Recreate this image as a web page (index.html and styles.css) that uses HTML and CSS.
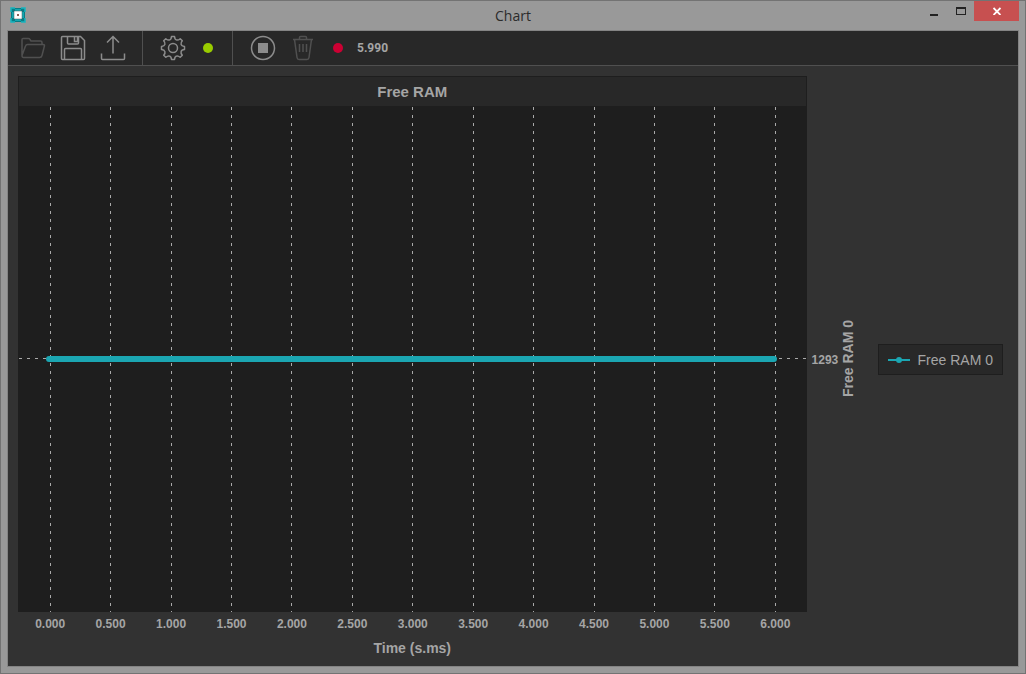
FILE: index.html
```
<!DOCTYPE html>
<html lang="en">
<head>
  <meta charset="UTF-8">
  <meta name="viewport" content="width=device-width, initial-scale=1.0">
  <title>Chart</title>
  <link rel="stylesheet" href="styles.css">
</head>
<body>
  <header class="titlebar">
    <svg class="app-icon" width="16" height="16" viewBox="0 0 16 16">
      <rect x="1" y="1" width="14" height="14" fill="#087d85"/>
      <path d="M1 5V1h4M11 1h4v4M15 11v4h-4M5 15H1v-4M5 3h6M5 13h6M3 5v6M13 5v6" fill="none" stroke="#17b5c0" stroke-width="1.500"/>
      <rect x="4" y="4" width="8" height="8" fill="#fff" stroke="#4c5c5e" stroke-width=".5"/>
      <rect x="7" y="7" width="2" height="2" fill="#8a6058"/>
    </svg>
    <h1 class="window-title">Chart</h1>
    <div class="window-buttons">
      <button class="win-btn" aria-label="Minimize">
        <svg width="10" height="12" viewBox="0 0 10 12"><path d="M1 9h8v2H1z" fill="#222"/></svg>
      </button>
      <button class="win-btn" aria-label="Maximize">
        <svg width="10" height="12" viewBox="0 0 10 12"><path d="M0 2h10v8H0zM1 4v5h8V4z" fill="#222" fill-rule="evenodd"/></svg>
      </button>
      <button class="win-btn win-close" aria-label="Close">
        <svg width="8" height="8" viewBox="0 0 8 8"><path d="M.5 1l7 7M7.500 1l-7 7" stroke="#fff" stroke-width="1.800"/></svg>
      </button>
    </div>
  </header>

  <main class="window">
    <div class="toolbar">
      <div class="tool-group">
        <button class="tool disabled" aria-label="Open">
          <svg viewBox="0 0 26 26"><path d="M2 20V4.500q0-1 1-1h5.500q1 0 1.500 1l1 1.500h9.500q1.500 0 1.500 1.500V9.500M2 20.500L5.500 11q.5-1.500 2-1.500H23q1.800 0 1.400 1.500L22 20.500q-.5 2-2.500 2h-16q-1.500 0-1.500-2z"/></svg>
        </button>
        <button class="tool" aria-label="Save">
          <svg viewBox="0 0 26 26"><path d="M2.500 1.500h18l4 4v18q0 1-1 1h-21q-1 0-1-1v-21q0-1 1-1zM7.500 2v6q0 1 1 1h9q1 0 1-1V2M14.500 2v4.500h3V2M4.500 24V14.500q0-1 1-1h15q1 0 1 1V24"/></svg>
        </button>
        <button class="tool" aria-label="Export">
          <svg viewBox="0 0 26 26"><path d="M13 18.500V2M7 7.500l6-6 6 6M1.500 18.500v5q0 1 1 1h21q1 0 1-1v-5"/></svg>
        </button>
      </div>
      <div class="tool-group">
        <button class="tool" aria-label="Settings">
          <svg viewBox="0 0 26 26">
            <circle cx="13" cy="13" r="4.500"/>
            <path d="M11.500 1.500h3q.3 3.200 2.200 3.500 1.600.3 3.500-1.300l2.100 2.100q-1.700 2-1.200 3.600.5 1.800 3.400 2.100v3q-2.900.3-3.400 2.100-.5 1.600 1.200 3.600l-2.100 2.100q-1.900-1.600-3.500-1.300-1.900.3-2.200 3.500h-3q-.3-3.200-2.200-3.500-1.600-.3-3.500 1.300l-2.100-2.100q1.700-2 1.200-3.600-.5-1.800-3.400-2.100v-3q2.900-.3 3.400-2.100.5-1.600-1.200-3.600l2.100-2.100q1.900 1.600 3.500 1.300 1.900-.3 2.200-3.500z" stroke-linejoin="round"/>
          </svg>
        </button>
        <span class="status-dot green"></span>
      </div>
      <div class="tool-group">
        <button class="tool" aria-label="Stop">
          <svg viewBox="0 0 26 26"><circle cx="13" cy="13" r="11.500"/><path d="M8 8h10v10H8z" class="solid"/></svg>
        </button>
        <button class="tool disabled" aria-label="Clear">
          <svg viewBox="0 0 26 26"><path d="M3 4.500h20M9.500 4V2.500q0-1 1-1h5q1 0 1 1V4M4.500 4.500l2.500 18q.3 2 2 2h8q1.700 0 2-2l2.500-18M9.500 9v8M13 9v8M16.500 9v8"/></svg>
        </button>
        <span class="status-dot red"></span>
        <span class="time-value">5.990</span>
      </div>
    </div>

    <div class="content">
      <section class="chart">
        <h2 class="chart-title">Free RAM</h2>
        <div class="plot">
          <div class="grid-lines">
            <i></i><i></i><i></i><i></i><i></i><i></i><i></i><i></i><i></i><i></i><i></i><i></i><i></i>
          </div>
          <div class="value-line"></div>
          <div class="series"></div>
        </div>
        <div class="y-axis">
          <span class="y-tick">1293</span>
          <span class="y-label">Free RAM 0</span>
        </div>
        <div class="x-axis">
          <div class="x-ticks">
            <span>0.000</span>
            <span>0.500</span>
            <span>1.000</span>
            <span>1.500</span>
            <span>2.000</span>
            <span>2.500</span>
            <span>3.000</span>
            <span>3.500</span>
            <span>4.000</span>
            <span>4.500</span>
            <span>5.000</span>
            <span>5.500</span>
            <span>6.000</span>
          </div>
          <div class="x-label">Time (s.ms)</div>
        </div>
      </section>
      <aside class="legend">
        <svg width="22" height="8" viewBox="0 0 22 8"><path d="M0 4h22" stroke="#1ba6b2" stroke-width="2"/><circle cx="11" cy="4" r="3" fill="#1ba6b2"/></svg>
        <span>Free RAM 0</span>
      </aside>
    </div>
  </main>
</body>
</html>
```
FILE: styles.css
```
* {
  box-sizing: border-box;
}

body {
  margin: 0;
  height: 100vh;
  display: flex;
  flex-direction: column;
  padding: 0 6px 6px;
  border: 1px solid #737373;
  background: #999;
  color: #a5a5a5;
  font-family: "Liberation Sans", Arial, sans-serif;
}

button {
  display: flex;
  align-items: center;
  justify-content: center;
  padding: 0;
  border: none;
  background: none;
}

/* title bar */
.titlebar {
  display: grid;
  grid-template-columns: 1fr auto 1fr;
  height: 29px;
}

.app-icon {
  margin: 6px 0 0 3px;
}

.window-title {
  margin: 0;
  color: #2b2b2b;
  font: 14px/29px "Open Sans", "Noto Sans", sans-serif;
}

.window-buttons {
  display: flex;
  justify-content: flex-end;
}

.win-btn {
  width: 27px;
  height: 20px;
}

.win-close {
  width: 45px;
  background: #c75050;
}

/* window body */
.window {
  flex: 1;
  min-height: 0;
  display: flex;
  flex-direction: column;
  border: 1px solid #848484;
  background: #323232;
}

.toolbar {
  display: flex;
  height: 35px;
  border-bottom: 1px solid #505050;
  background: #282828;
}

.tool-group {
  display: flex;
  align-items: center;
  gap: 14px;
  padding: 0 16px 0 12px;
}

.tool-group + .tool-group {
  padding: 0 19px 0 17px;
  border-left: 1px solid #505050;
}

.tool svg {
  width: 26px;
  height: 26px;
  fill: none;
  stroke: #8c8c8c;
  stroke-width: 1.5;
}

.tool.disabled svg {
  stroke: #505050;
}

.tool .solid {
  fill: #8c8c8c;
  stroke: none;
}

.status-dot {
  width: 10px;
  height: 10px;
  margin: 0 0 0 3px;
  border-radius: 50%;
}

.green {
  background: #9c0;
}

.red {
  background: #cc0033;
}

.time-value {
  font: bold 12px/16px Roboto, sans-serif;
}

/* chart */
.content {
  flex: 1;
  min-height: 0;
  display: flex;
  align-items: stretch;
  gap: 21px;
  padding: 10px 15px 9px 10px;
}

.chart {
  flex: 1;
  display: grid;
  grid-template-columns: 1fr 50px;
  grid-template-rows: 30px 1fr 45px;
}

.chart-title {
  margin: 0;
  border: 1px solid #1e1e1e;
  border-bottom: none;
  background: #282828;
  font-size: 15px;
  line-height: 30px;
  text-align: center;
}

.plot {
  grid-row: 2;
  position: relative;
  background: #1e1e1e;
}

.grid-lines {
  display: grid;
  grid-template-columns: repeat(13, 1fr);
  height: 100%;
  padding: 1px 1px 0 2px;
}

.grid-lines i {
  width: 1px;
  margin: 0 auto;
  background: repeating-linear-gradient(#aaa 0 3px, transparent 3px 8px);
}

.value-line {
  position: absolute;
  top: 50%;
  left: 1px;
  right: 1px;
  height: 1px;
  margin-top: -1px;
  background: repeating-linear-gradient(90deg, #aaa 0 3px, transparent 3px 8px);
}

.series {
  position: absolute;
  top: 50%;
  left: 28px;
  right: 30px;
  height: 6px;
  margin-top: -3px;
  border-radius: 3px;
  background: #1ba6b2;
}

.y-axis {
  grid-row: 2;
  display: flex;
  align-items: center;
  gap: 3px;
  padding-left: 5px;
}

.y-tick {
  padding-top: 2px;
  font-size: 12px;
  font-weight: bold;
}

.y-label {
  writing-mode: vertical-rl;
  rotate: 180deg;
  font-size: 14px;
  font-weight: bold;
  line-height: 14px;
  white-space: nowrap;
}

.x-axis {
  grid-row: 3;
  font-weight: bold;
  text-align: center;
}

.x-ticks {
  display: grid;
  grid-template-columns: repeat(13, 1fr);
  padding: 4px 1px 0 2px;
  font-size: 12px;
  line-height: 16px;
}

.x-label {
  margin-top: 8px;
  font-size: 14px;
  line-height: 16px;
}

.legend {
  align-self: center;
  display: flex;
  align-items: center;
  gap: 8px;
  height: 31px;
  margin-top: -14px;
  padding: 0 9px;
  border: 1px solid #1e1e1e;
  background: #282828;
  font-size: 14px;
}
```
